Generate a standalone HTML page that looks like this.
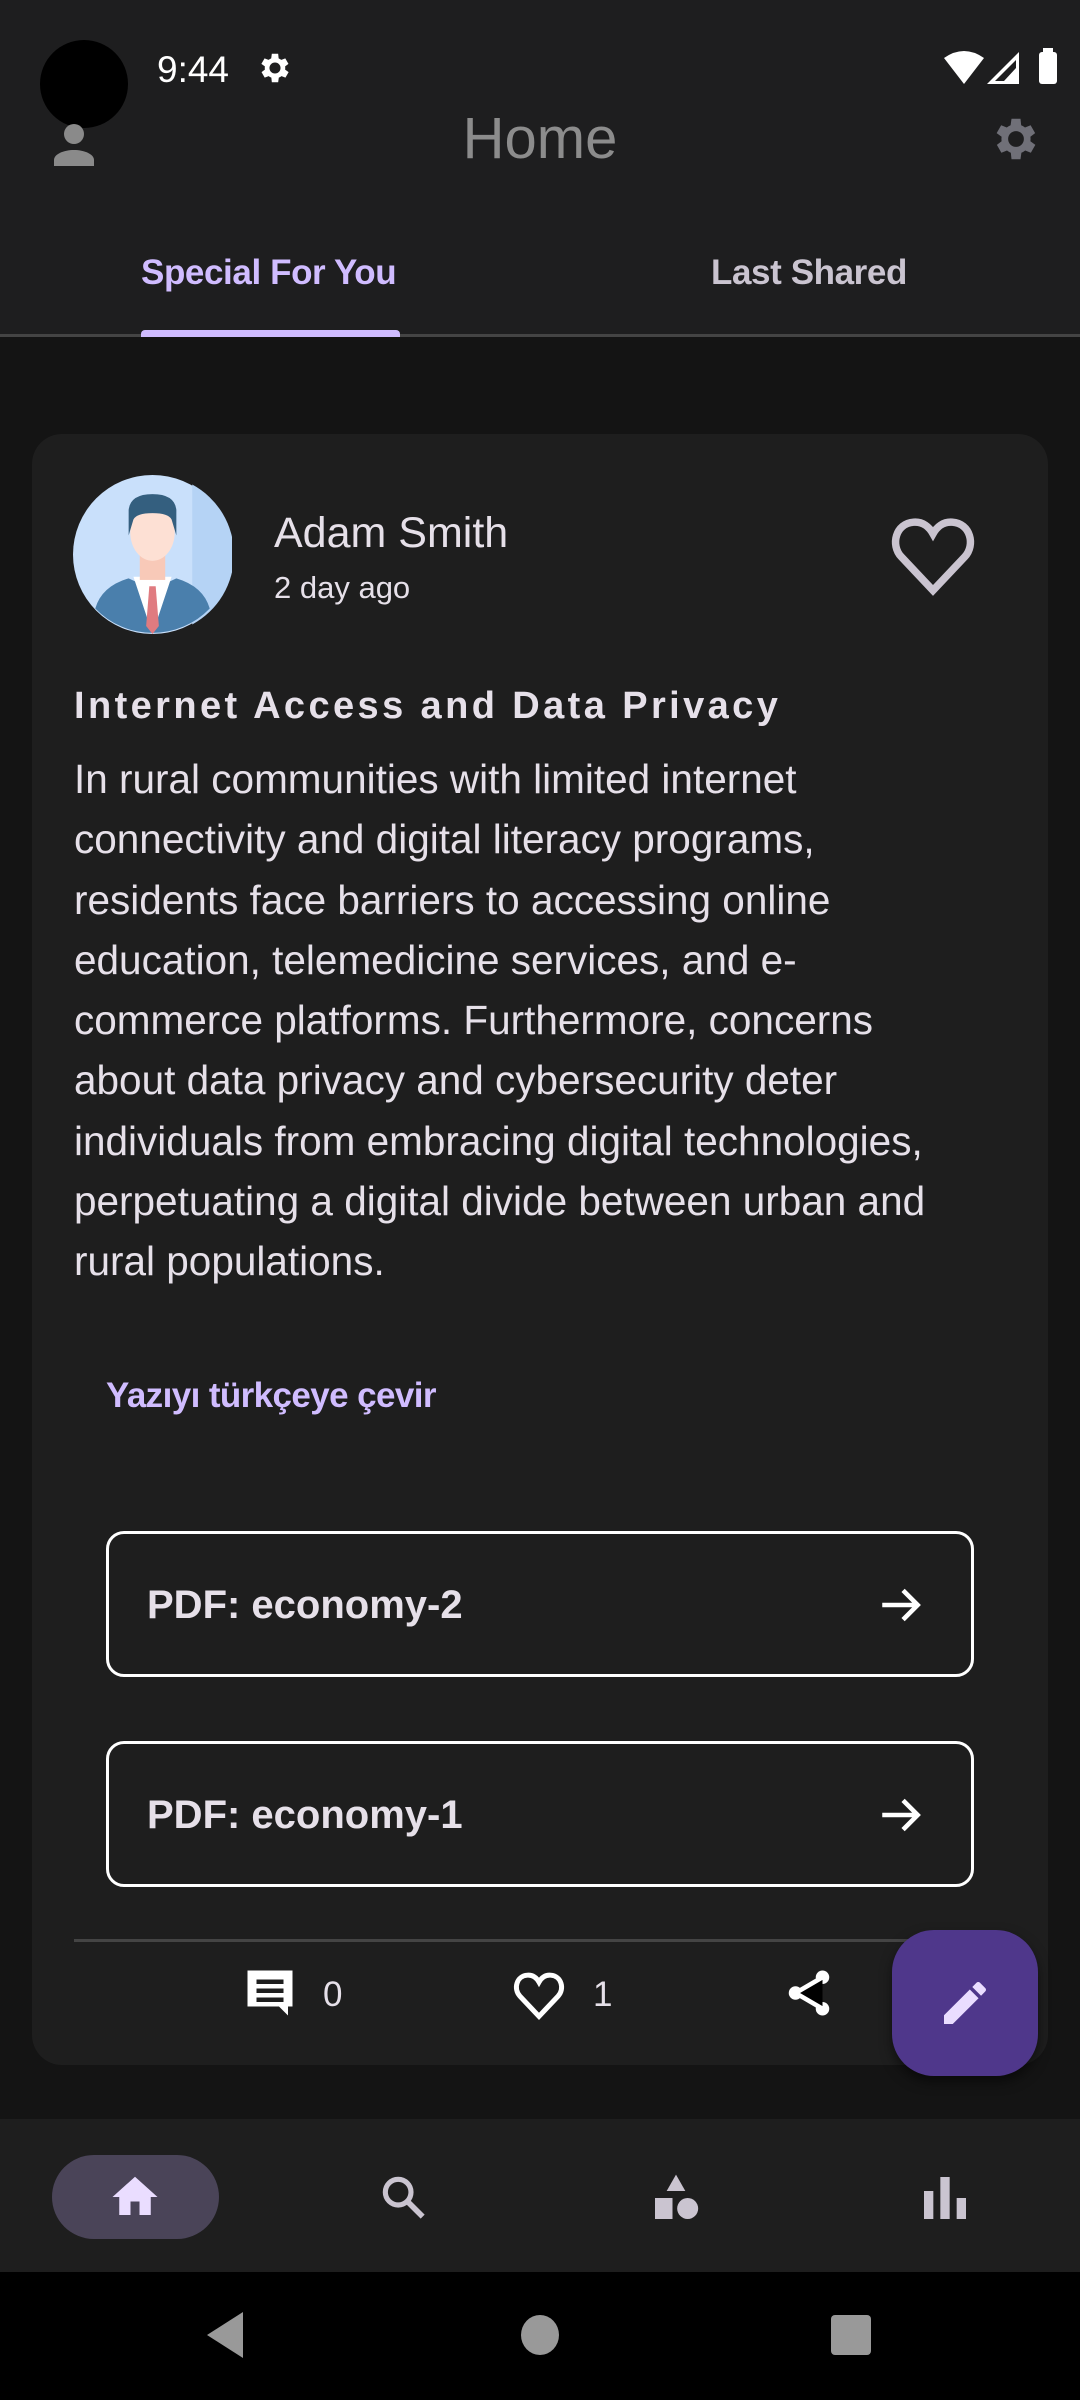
<!DOCTYPE html>
<html><head><meta charset="utf-8"><style>
*{margin:0;padding:0;box-sizing:border-box}
body{width:1080px;height:2400px;background:#141414;font-family:"Liberation Sans",sans-serif;color:#e6e0e9;position:relative;overflow:hidden}
.abs{position:absolute}
.nw{white-space:nowrap}
</style></head><body>
<div class="abs" style="left:0;top:0;width:1080px;height:336px;background:#1e1e1f"></div>
<div class="abs" style="left:0;top:334px;width:1080px;height:3px;background:#444"></div>
<div class="abs" style="left:40px;top:40px;width:88px;height:88px;border-radius:50%;background:#000"></div>
<div class="abs nw" style="left:157px;top:49px;font-size:37px;color:#fff">9:44</div>
<svg class="abs" style="left:256px;top:49px" width="38" height="38" viewBox="0 0 24 24"><path fill="#fff" d="M19.4 13a7.5 7.5 0 0 0 0-2l2.1-1.6-2-3.5-2.5 1a7 7 0 0 0-1.7-1L15 3h-4l-.4 2.9a7 7 0 0 0-1.7 1l-2.5-1-2 3.5L6.6 11a7.5 7.5 0 0 0 0 2l-2.1 1.6 2 3.5 2.5-1a7 7 0 0 0 1.7 1L11 21h4l.4-2.9a7 7 0 0 0 1.7-1l2.5 1 2-3.5zM13 15.5a3.5 3.5 0 1 1 0-7 3.5 3.5 0 0 1 0 7z" transform="translate(-1 0)"/></svg>
<svg class="abs" style="left:944px;top:50px" width="40" height="34" viewBox="0 0 40 34"><path fill="#fff" d="M0 8 Q20 -6 40 8 L20 34Z"/></svg>
<svg class="abs" style="left:987px;top:52px" width="32" height="32" viewBox="0 0 32 32"><path fill="#fff" d="M32 0V32H0Z"/><path fill="#1e1e1f" d="M29 8V29H8Z"/><path fill="#fff" d="M29 16V29H17Z"/></svg>
<div class="abs" style="left:1039px;top:52px;width:18px;height:32px;background:#fff;border-radius:3px"></div>
<div class="abs" style="left:1043px;top:48px;width:10px;height:5px;background:#fff"></div>
<svg class="abs" style="left:50px;top:120px" width="48" height="48" viewBox="0 0 48 48"><circle cx="24" cy="14" r="10" fill="#8a8a8a"/><path fill="#8a8a8a" d="M4 46v-6c0-6 10-10 20-10s20 4 20 10v6z"/></svg>
<div class="abs nw" style="left:0;width:1080px;text-align:center;top:105px;font-size:58px;color:#8c8c8c">Home</div>
<svg class="abs" style="left:989px;top:112px" width="54" height="54" viewBox="0 0 24 24"><path fill="#707078" d="M19.4 13a7.5 7.5 0 0 0 0-2l2.1-1.6-2-3.5-2.5 1a7 7 0 0 0-1.7-1L15 3h-4l-.4 2.9a7 7 0 0 0-1.7 1l-2.5-1-2 3.5L6.6 11a7.5 7.5 0 0 0 0 2l-2.1 1.6 2 3.5 2.5-1a7 7 0 0 0 1.7 1L11 21h4l.4-2.9a7 7 0 0 0 1.7-1l2.5 1 2-3.5zM13 15.5a3.5 3.5 0 1 1 0-7 3.5 3.5 0 0 1 0 7z" transform="translate(-1 0)"/></svg>
<div class="abs nw" style="left:141px;top:253px;font-size:35px;color:#d0bcff;font-weight:bold;letter-spacing:-0.4px">Special For You</div>
<div class="abs nw" style="left:711px;top:253px;font-size:35px;color:#cac4d0;font-weight:bold;letter-spacing:-0.4px">Last Shared</div>
<div class="abs" style="left:141px;top:330px;width:259px;height:7px;background:#d0bcff;border-radius:4px 4px 0 0"></div>
<div class="abs" style="left:32px;top:434px;width:1016px;height:1631px;background:#1e1e1e;border-radius:30px"></div>
<svg class="abs" style="left:73px;top:475px" width="159" height="159" viewBox="0 0 100 100">
<circle cx="50" cy="50" r="50" fill="#c9e0fb"/><path d="M75 6A50 50 0 0 1 75 94Z" fill="#b5d3f5"/>
<path d="M14 84 Q18 70 35 65 L50 72 L65 65 Q82 70 86 84 A50 50 0 0 1 14 84Z" fill="#4a7fac"/>
<path d="M38 64 L50 100 L62 64 Z" fill="#fff"/>
<path d="M48 70 L52 70 L54 95 L50 100 L46 95Z" fill="#e07b80"/>
<rect x="42" y="48" width="16" height="18" fill="#f8c9b8"/>
<ellipse cx="50" cy="36" rx="14" ry="18" fill="#fde0d4"/>
<path d="M35 38 L35 22 Q36 12 50 12 Q64 12 65 22 L65 38 L62 28 Q60 24 50 24 Q40 24 38 28Z" fill="#345f7f"/>
</svg>
<div class="abs nw" style="left:274px;top:509px;font-size:43px;color:#e6e0e9">Adam Smith</div>
<div class="abs nw" style="left:274px;top:570px;font-size:31px;color:#e6e0e9">2 day ago</div>
<svg class="abs" style="left:888px;top:514px" width="90" height="82" viewBox="0 0 24 22"><path fill="none" stroke="#cac4d0" stroke-width="2" d="M12 20.5 L3.5 11.5 C0.5 8.3 2 2.5 6.8 2.2 9.3 2 11 3.5 12 5.3 13 3.5 14.7 2 17.2 2.2 22 2.5 23.5 8.3 20.5 11.5Z"/></svg>
<div class="abs nw" style="left:74px;top:685px;font-size:38px;font-weight:bold;letter-spacing:3.4px">Internet Access and Data Privacy</div>
<div class="abs nw" style="left:74px;top:749px;font-size:40.5px;line-height:60.3px;color:#e6e0e9">In rural communities with limited internet<br>connectivity and digital literacy programs,<br>residents face barriers to accessing online<br>education, telemedicine services, and e-<br>commerce platforms. Furthermore, concerns<br>about data privacy and cybersecurity deter<br>individuals from embracing digital technologies,<br>perpetuating a digital divide between urban and<br>rural populations.</div>
<div class="abs nw" style="left:106px;top:1376px;font-size:35px;color:#d0bcff;font-weight:bold;letter-spacing:-0.6px">Yazıyı türkçeye çevir</div>
<div class="abs" style="left:106px;top:1531px;width:868px;height:146px;border:3px solid #fff;border-radius:18px"></div>
<div class="abs nw" style="left:147px;top:1583px;font-size:40px;font-weight:bold">PDF: economy-2</div>
<svg class="abs" style="left:876px;top:1580px" width="50" height="50" viewBox="0 0 24 24"><path fill="none" stroke="#fff" stroke-width="2.2" d="M3 12H20M13 5l7 7-7 7"/></svg>
<div class="abs" style="left:106px;top:1741px;width:868px;height:146px;border:3px solid #fff;border-radius:18px"></div>
<div class="abs nw" style="left:147px;top:1793px;font-size:40px;font-weight:bold">PDF: economy-1</div>
<svg class="abs" style="left:876px;top:1790px" width="50" height="50" viewBox="0 0 24 24"><path fill="none" stroke="#fff" stroke-width="2.2" d="M3 12H20M13 5l7 7-7 7"/></svg>
<div class="abs" style="left:74px;top:1939px;width:840px;height:3px;background:#444"></div>
<svg class="abs" style="left:243px;top:1966px" width="54" height="54" viewBox="0 0 24 24"><path fill="#fff" d="M2 2h20v16h-2v4l-4-4H2z"/><path fill="#1e1e1e" d="M6 6h12v2H6zm0 4h12v2H6zm0 4h12v2H6z"/></svg>
<div class="abs nw" style="left:323px;top:1975px;font-size:35px;color:#e6e0e9">0</div>
<svg class="abs" style="left:512px;top:1970px" width="54" height="50" viewBox="0 0 24 22"><path fill="none" stroke="#fff" stroke-width="2.2" d="M12 20.5 L3.5 11.5 C0.5 8.3 2 2.5 6.8 2.2 9.3 2 11 3.5 12 5.3 13 3.5 14.7 2 17.2 2.2 22 2.5 23.5 8.3 20.5 11.5Z"/></svg>
<div class="abs nw" style="left:593px;top:1975px;font-size:35px;color:#e6e0e9">1</div>
<svg class="abs" style="left:782px;top:1966px" width="54" height="54" viewBox="0 0 24 24"><circle cx="18" cy="5" r="3" fill="#fff"/><circle cx="6" cy="12" r="3" fill="#fff"/><circle cx="18" cy="19" r="3" fill="#fff"/><path stroke="#fff" stroke-width="2" d="M18 5L6 12L18 19"/></svg>
<div class="abs" style="left:892px;top:1930px;width:146px;height:146px;background:#4f378b;border-radius:42px;box-shadow:0 6px 12px rgba(0,0,0,.5)"></div>
<svg class="abs" style="left:937px;top:1975px" width="56" height="56" viewBox="0 0 24 24"><path fill="#eaddff" d="M3 17.25V21h3.75L17.81 9.94l-3.75-3.75zM20.71 7.04a1 1 0 0 0 0-1.41l-2.34-2.34a1 1 0 0 0-1.41 0l-1.83 1.83 3.75 3.75z"/></svg>
<div class="abs" style="left:0;top:2119px;width:1080px;height:153px;background:#1e1e1e"></div>
<div class="abs" style="left:52px;top:2155px;width:167px;height:84px;background:#4a4458;border-radius:42px"></div>
<svg class="abs" style="left:108px;top:2170px" width="54" height="54" viewBox="0 0 24 24"><path fill="#eaddff" d="M10 20v-6h4v6h5v-8h3L12 3 2 12h3v8z"/></svg>
<svg class="abs" style="left:376px;top:2170px" width="56" height="56" viewBox="0 0 24 24"><circle cx="9.5" cy="9.5" r="5.5" fill="none" stroke="#cac4d0" stroke-width="2.2"/><path stroke="#cac4d0" stroke-width="2.4" d="M13.5 13.5L20 20"/></svg>
<svg class="abs" style="left:648px;top:2170px" width="56" height="56" viewBox="0 0 24 24"><path fill="#cac4d0" d="M12 2l4 7H8z"/><rect x="3" y="12" width="7.5" height="9" fill="#cac4d0"/><circle cx="17" cy="16.5" r="4.5" fill="#cac4d0"/></svg>
<svg class="abs" style="left:917px;top:2170px" width="56" height="56" viewBox="0 0 24 24"><path fill="#cac4d0" d="M10 3h4v18h-4zM3 9h4v12H3zM17 12h4v9h-4z"/></svg>
<div class="abs" style="left:0;top:2272px;width:1080px;height:128px;background:#000"></div>
<svg class="abs" style="left:205px;top:2312px" width="40" height="46" viewBox="0 0 40 46"><path fill="#999" d="M38 0V46L2 23Z"/></svg>
<div class="abs" style="left:521px;top:2315px;width:38px;height:40px;border-radius:50%;background:#999"></div>
<div class="abs" style="left:831px;top:2315px;width:40px;height:40px;border-radius:4px;background:#999"></div>
</body></html>
